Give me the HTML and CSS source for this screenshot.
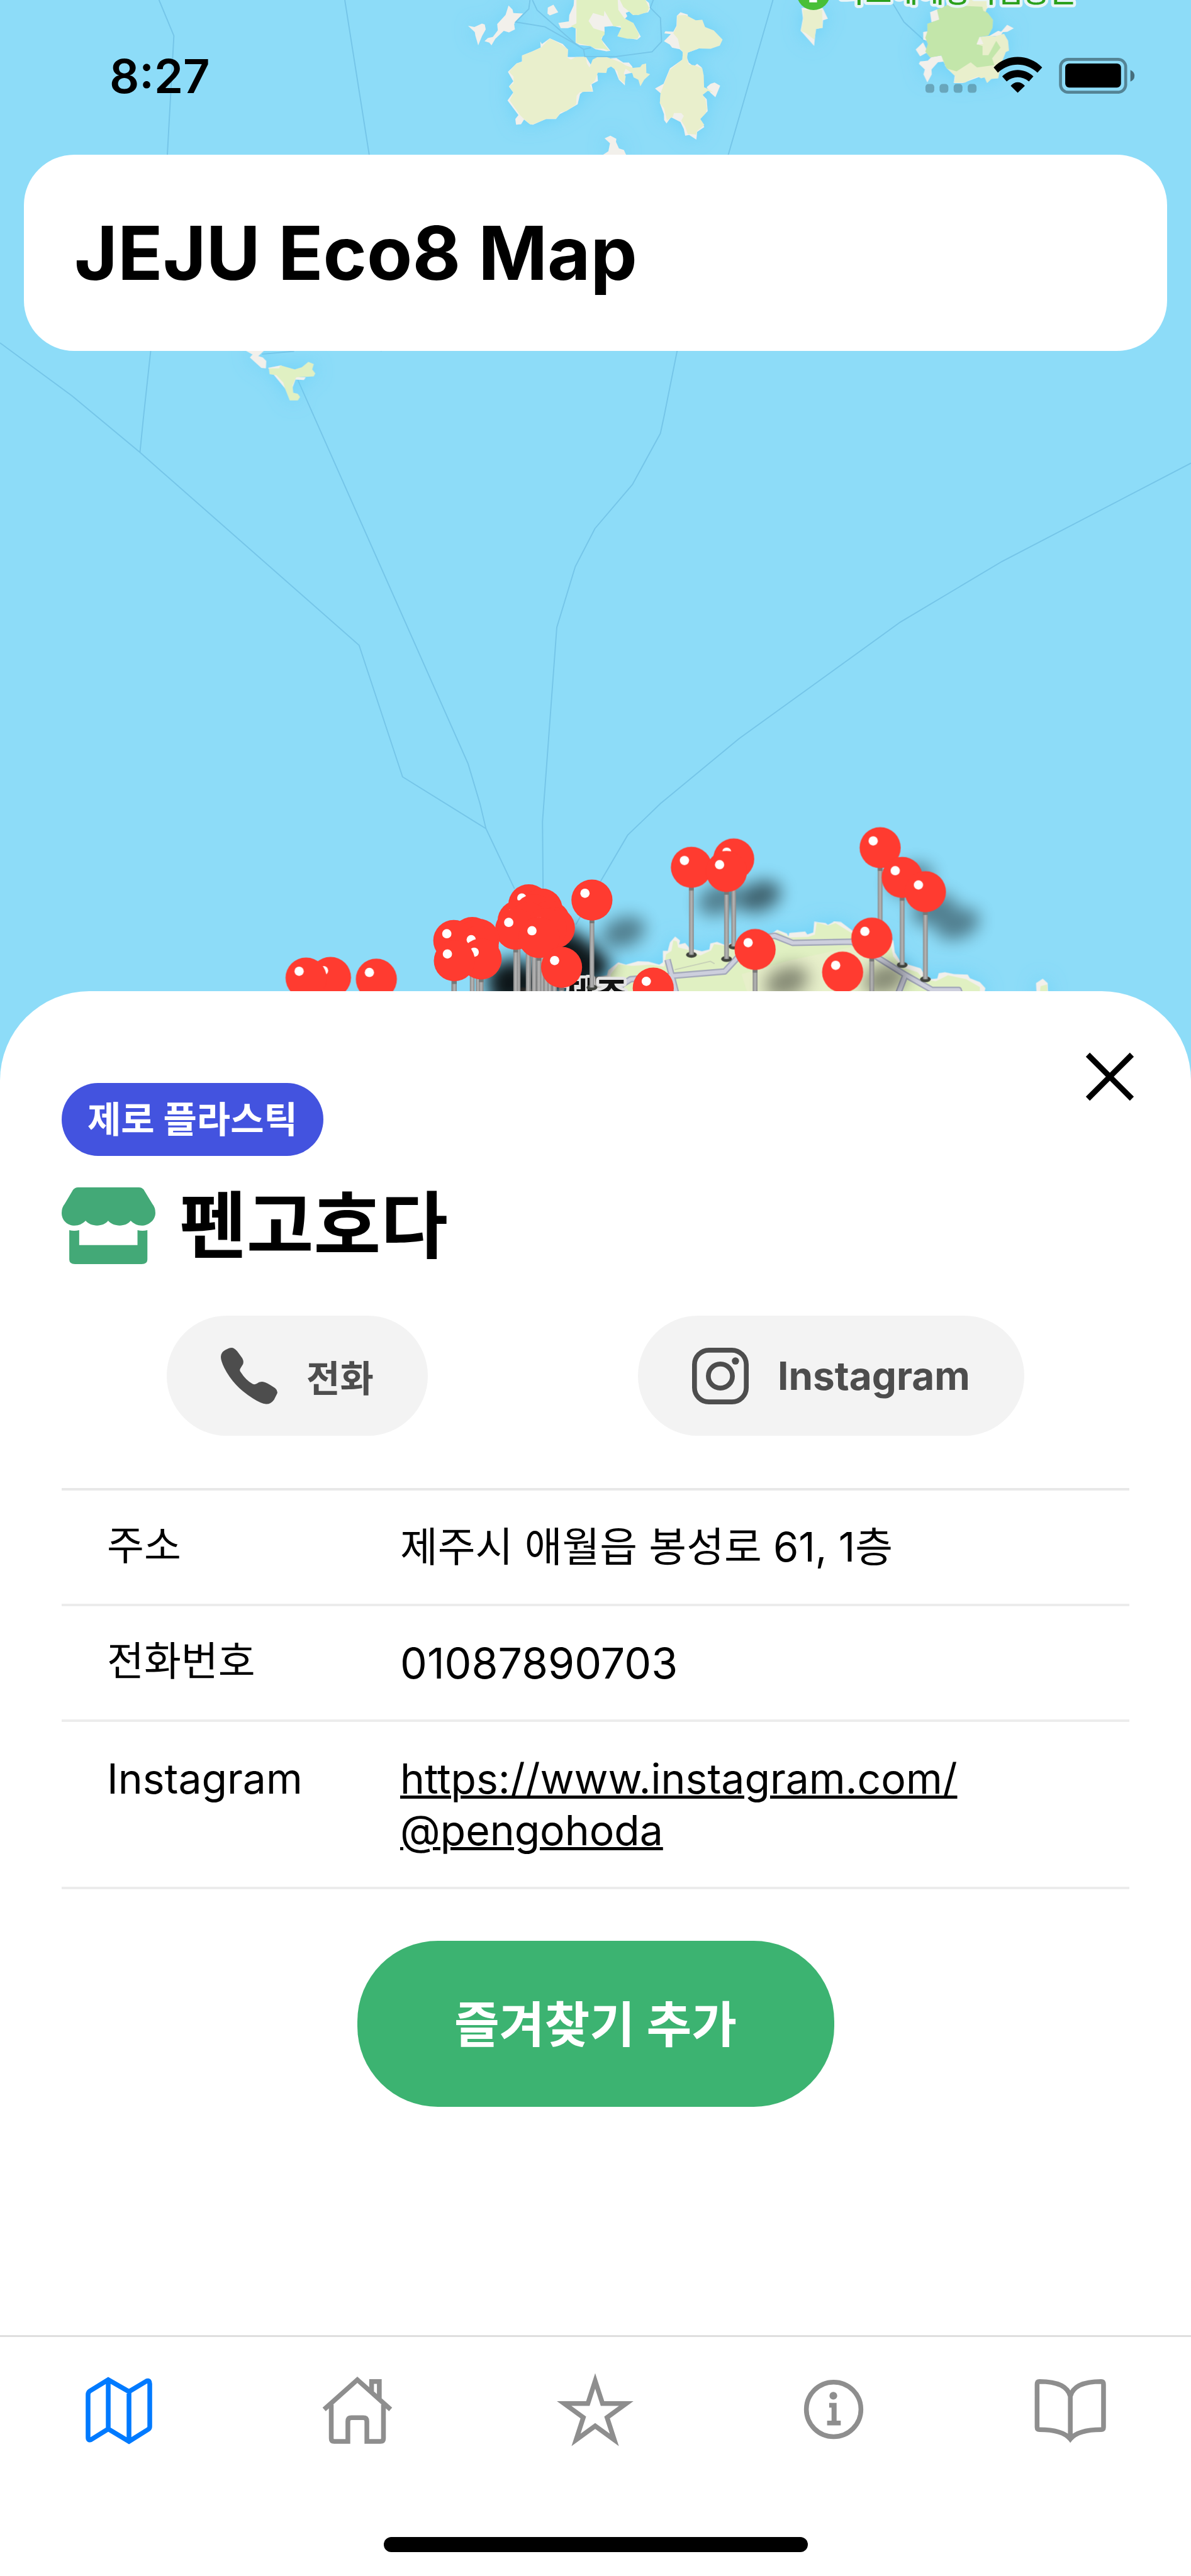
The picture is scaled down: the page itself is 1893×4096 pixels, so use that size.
FILE: index.html
```html
<!DOCTYPE html>
<html lang="ko">
<head>
<meta charset="utf-8">
<meta name="viewport" content="width=device-width, initial-scale=1">
<title>JEJU Eco8 Map</title>
<link rel="stylesheet" href="styles.css">
</head>
<body>
<div class="hero">
  <svg class="map" viewBox="0 0 2000 1830" preserveAspectRatio="xMidYMin slice" role="img" aria-label="제주 지도">
    <defs>
      <linearGradient id="stem" x1="0" x2="1" y1="0" y2="0">
        <stop offset="0" stop-color="#858585"/><stop offset=".5" stop-color="#b8b8b8"/><stop offset="1" stop-color="#858585"/>
      </linearGradient>
      <filter id="soft" x="-60%" y="-60%" width="220%" height="220%"><feGaussianBlur stdDeviation="14"/></filter>
      <filter id="glow" x="-20%" y="-20%" width="140%" height="140%">
        <feDropShadow dx="0" dy="0" stdDeviation="16" flood-color="#68d0f8" flood-opacity=".9"/>
      </filter>
      <g id="pin">
        <ellipse cx="0" cy="147" rx="9" ry="5" fill="#3f423c"/>
        <rect x="-4" y="30" width="8" height="117" fill="url(#stem)"/>
        <rect x="-4" y="33" width="8" height="6" fill="#777"/>
        <circle r="34.5" fill="#ff3b30"/>
        <circle cx="-11.7" cy="-11.4" r="7.8" fill="#fff"/>
      </g>
      <ellipse id="shade" cx="53" cy="54" rx="38" ry="25" transform="rotate(-20 53 54)"/>
    </defs>

    <g class="sea-lines">
      <path d="M267 0L292 60L281 260L253 590L241 700L235 760"/>
      <path d="M579 0L620 260L640 590"/>
      <path d="M0 576L121 665L235 760L603 1084L676 1305L816 1392"/>
      <path d="M500 638L786 1283L806 1350L816 1392L864 1493"/>
      <path d="M1298 0L1223 260L1137 590L1115 700L1109 728L1062 814L999 888L966 952L935 1054L911 1380L912 1500"/>
      <path d="M2000 778L1683 943L1512 1045L1241 1241L1109 1350L1054 1403L1010 1478L967 1553"/>
      <path d="M440 595L494 590M1500 7L1518 37L1553 69"/>
    </g>

    <g filter="url(#glow)">
      <g transform="translate(780 0) scale(.33333)">
        <g fill="#f2f0eb">
          <path d="M18 130L50 136L88 119L102 124L107 148L88 182L69 228L55 180L52 162Z"/>
          <path d="M222 28L242 48L246 66L295 68L259 106L250 121L254 148L224 163L198 155L155 196L136 228L125 215L101 208L118 192L143 186L168 153L165 121L207 75Z"/>
          <path d="M420 38L448 24L472 62L430 78L418 68Z"/>
          <path d="M552 0L550 28L528 76L526 108L473 116L485 142H520L560 130L560 215L580 227L635 232L660 248L715 258L735 256L690 200L706 160L705 135L765 130L850 116L888 185L870 200L780 185L790 140L755 132L808 95L820 82L812 65L830 58L850 76L925 62L935 44L930 15L912 0Z"/>
          <path d="M1070 80L1088 62L1125 74L1120 150L1150 170L1140 240L1180 245L1125 265L1120 290L1130 315L1155 335L1172 322L1195 340L1200 480L1220 500L1225 560L1185 600L1208 640L1172 665L1168 704L1132 680L1112 684L1105 650L1088 615L1040 590L1018 622L1006 605L1005 575L985 520L988 470L960 446L1003 422L1035 345L1098 300L1100 262L1084 248L1046 240L1034 224L1005 208L1040 172L1007 168L1012 158L1052 160L1068 130Z"/>
          <path d="M1220 440L1240 422L1260 416L1288 432L1264 490L1240 468Z"/>
          <path d="M382 210L390 222L430 193L495 222L520 250L520 288L612 288L670 380L672 408L640 425L648 462H596L582 475L570 525L520 555L480 575L460 600L410 600L345 628L330 626L300 602L285 626L260 628L256 600L272 580L217 506L246 466L224 436L246 410L219 362L262 320L290 310L290 280L340 260L384 240Z"/>
          <path d="M735 295L765 292L800 315L828 315L845 335L850 365L808 375L808 430L778 402Z"/>
          <path d="M706 697L735 684L765 700L763 715L778 748L803 756L815 782H695L725 762L733 722Z"/>
        </g>
        <g fill="#e0f0c2">
          <path d="M564 0H772L775 50L805 92L850 116L880 175L872 196L820 195L770 183L790 140L785 130L752 134L705 54L702 82L648 66L625 105L650 143L706 160L705 175L688 192L700 220L730 256L700 246L660 245L635 232L562 216L564 145L535 132L564 118Z"/>
          <path d="M783 0H912L930 40L922 60L875 76L846 74L830 58L800 35Z"/>
        </g>
        <g fill="#e9efcc">
          <path d="M1072 78L1115 76L1165 102L1198 100L1212 136L1256 154L1300 200L1286 230L1240 246L1180 244L1122 266L1122 300L1130 325L1160 330L1198 345L1205 380L1207 440L1225 448L1255 466L1225 458L1200 478L1214 500L1222 545L1216 570L1188 600L1208 630L1172 660L1168 678L1125 675L1112 640L1092 608L1105 584L1092 570H1055L1050 588L1020 606L1005 545L984 520L988 470L1008 415L1035 352L1098 300L1100 262L1086 245L1075 196L1052 168L1070 130Z"/>
          <path d="M388 238L430 193L488 224L522 250L518 290L536 300L560 288L612 286L617 320L630 340L646 300L670 288H715L745 298L790 315L812 330L850 342L885 338L895 325L915 320L916 368L935 374L905 402L886 435L876 402L852 390L846 370L812 346L802 370L812 385L806 420L778 396L770 358L738 335L720 345L714 368L672 366L658 405L632 430L646 458L580 465L565 482L562 526L512 560L484 566L462 598L415 598L345 626L330 626L300 600L280 580L228 506L247 466L224 436L247 420L247 386L224 362L262 320L290 312L290 280L345 258Z"/>
        </g>
      </g>
      <g transform="translate(1330 0) scale(.38265 .33333)">
        <g fill="#f2f0eb">
          <path d="M42 40H134L157 94L136 102L134 140L104 146L97 231L50 170L38 155L48 92Z"/>
          <path d="M575 214L543 250L562 284L596 262ZM655 280L670 310L640 314L612 350L613 375L594 415L577 375L583 350L557 322L562 310L596 306L612 288ZM606 62L640 46L660 100L612 112ZM576 162L594 158V206L576 200ZM830 40L865 20L862 38L838 56ZM862 184L905 155L918 160L944 125L973 143L945 160L925 162L915 180Z"/>
          <path d="M670 330L715 375L710 418L750 418L820 388L900 395L912 360Z"/>
        </g>
        <path fill="#e9efcc" d="M680 0H865L850 60L800 180L822 186L870 180L888 184L930 170L948 205L952 255L938 262L918 320L905 395L875 398L856 418L845 390L830 395L815 386L780 402L760 416H712L717 385L680 345L660 300ZM48 50H132L134 140L106 146L98 200L62 168L40 155L50 92Z"/>
        <path fill="#c3e6aa" d="M636 48L680 26L835 34L840 55L858 64L882 100L880 140L862 178L822 186L810 222L836 232V278H862L896 206L915 240L878 294L888 328L812 340L784 314L722 360L678 345L655 280L606 290L585 260L596 222L585 190L594 158V120L646 98Z"/>
        <path fill="#f2f0eb" d="M825 184L840 222L810 224Z"/>
      </g>
      <g transform="scale(.63776 .44643)">
        <path fill="#f2f0eb" d="M645 1318L665 1334L658 1345L688 1384L700 1386L701 1358L692 1345L680 1340L695 1320ZM706 1384L740 1375L790 1420H805L800 1430L778 1428L765 1478L752 1464Z"/>
        <path fill="#e0f0c2" d="M708 1386L735 1386L738 1375L776 1390L795 1382L812 1362L826 1370L822 1390L830 1405L826 1416L780 1420L770 1450L772 1478L784 1482L790 1494L784 1507H763L750 1460L746 1440L728 1412L710 1408Z"/>
      </g>
      <g transform="translate(1000 1350) scale(.5102 .33333)">
        <path fill="#f2f0eb" d="M-290 960L-240 925L-200 940L-60 950L-40 880L38 866L42 840L75 800L100 812L140 795L175 797L210 812L222 800V742H238L245 700L262 670L278 690L275 710L295 703L310 730L350 745L375 735L378 705L400 697L425 712L455 700L520 680L580 655L598 636L630 655L635 670L638 652L690 645L697 660L717 650L720 596L757 602L765 612L785 595L808 597L845 640L980 690L985 750L1005 800L1070 830L1078 850L1105 885L1125 882L1130 855L1150 850L1180 860L1225 862L1232 880L1265 900L1283 930L1268 1050H-290ZM1455 1050L1450 905L1472 883L1488 905L1492 1050Z"/>
        <path fill="#e0f0c2" d="M45 950L50 860L75 810L120 818L180 812L226 822L232 760L250 742L256 690L268 695L272 725L300 735L345 765L380 740L390 708L420 715L455 720L520 690L580 662L600 645L628 668L640 675L700 672L722 660L728 600L765 615L790 602L840 650L970 700L980 770L1010 825L1060 850L1080 885L1120 895L1160 865L1220 885L1265 925L1265 1050H45ZM1455 1050L1465 920L1486 912L1492 1050Z"/>
        <path fill="#e9efcc" opacity=".8" d="M480 860L640 790L760 750L850 720L960 780L1000 870V1050H520Z"/>
      </g>
    </g>
    <g class="roads">
      <path class="road-edge" d="M1040 1672L1043 1655L1059 1645L1133 1639L1217 1632L1268 1577L1301 1572L1331 1584L1431 1582L1521 1638L1565 1663L1610 1663L1614 1675M1121 1612L1128 1639L1137 1675M1520 1639L1506 1675"/>
      <path class="road-fill" d="M1040 1672L1043 1655L1059 1645L1133 1639L1217 1632L1268 1577L1301 1572L1331 1584L1431 1582L1521 1638L1565 1663L1610 1663L1614 1675M1121 1612L1128 1639L1137 1675M1520 1639L1506 1675"/>
      <path class="lane" d="M1133 1629L1193 1615L1200 1619"/>
    </g>
    <g class="sea-lines">
      <path d="M890 0L888 15L866 37L915 45L968 75L980 83L992 80M894 0L902 17L968 75M980 83L982 95H1035L1095 87L1111 70L1109 30L1092 13L1097 0"/>
    </g>
    <circle cx="1366" cy="-11" r="28" fill="#48bf38"/>
    <path d="M1359 4H1372V0H1368V-8H1363V0H1359Z" fill="#fff"/>
    <text class="park-label" x="1409" y="4">다도해해상국립공원</text>

    <g filter="url(#soft)" opacity=".42">
      <use href="#shade" x="1155" y="1457"/><use href="#shade" x="1477" y="1424"/><use href="#shade" x="1515" y="1474"/><use href="#shade" x="1555" y="1498"/><use href="#shade" x="994" y="1512"/><use href="#shade" x="1268" y="1595"/><use href="#shade" x="1434" y="1590"/>
    </g>
    <g filter="url(#soft)" opacity=".55"><use href="#shade" x="1222" y="1452"/></g>
    <g filter="url(#soft)" opacity=".9">
      <use href="#shade" x="888" y="1535"/><use href="#shade" x="910" y="1550"/><use href="#shade" x="925" y="1565"/><use href="#shade" x="910" y="1590"/><use href="#shade" x="935" y="1575"/><use href="#shade" x="800" y="1584"/><use href="#shade" x="805" y="1610"/><use href="#shade" x="840" y="1600"/>
    </g>
    <text class="city-label" x="944" y="1694">제주</text>

    <use href="#pin" x="888" y="1520"/><use href="#pin" x="910" y="1527"/><use href="#pin" x="897" y="1537"/><use href="#pin" x="870" y="1547"/><use href="#pin" x="923" y="1548"/><use href="#pin" x="887" y="1550"/><use href="#pin" x="931" y="1559"/><use href="#pin" x="917" y="1560"/><use href="#pin" x="866" y="1561"/><use href="#pin" x="905" y="1575"/><use href="#pin" x="943" y="1625"/>
    <use href="#pin" x="793" y="1575"/><use href="#pin" x="804" y="1578"/><use href="#pin" x="762" y="1580"/><use href="#pin" x="803" y="1590"/><use href="#pin" x="808" y="1611"/><use href="#pin" x="763" y="1614"/>
    <use href="#pin" x="555" y="1642"/><use href="#pin" x="514" y="1643"/><use href="#pin" x="632" y="1645"/>
    <use href="#pin" x="994" y="1512"/>
    <use href="#pin" x="1232" y="1443"/><use href="#pin" x="1161" y="1457"/><use href="#pin" x="1220" y="1464"/>
    <use href="#pin" x="1478" y="1424"/><use href="#pin" x="1515" y="1474"/><use href="#pin" x="1554" y="1498"/>
    <use href="#pin" x="1464" y="1576"/><use href="#pin" x="1268" y="1595"/><use href="#pin" x="1415" y="1633"/><use href="#pin" x="1097" y="1660"/>
  </svg>

  <header class="top">
    <div class="status">
      <time class="clock">8:27</time>
      <svg class="status-icons" viewBox="1545 90 370 75" aria-hidden="true">
        <g fill="#000" opacity=".24"><rect x="1551" y="141" width="15" height="15" rx="5"/><rect x="1575" y="141" width="15" height="15" rx="5"/><rect x="1599" y="141" width="15" height="15" rx="5"/><rect x="1623" y="141" width="15" height="15" rx="5"/></g>
        <g transform="translate(1330 0) scale(.38265 .33333)">
          <path d="M881 338C940 267 1036 267 1097 338L1076 365C1025 310 951 310 900 365ZM919 384C958 340 1018 340 1058 384L1038 410C1008 381 968 381 939 410ZM957 432C974 408 1002 408 1020 432L988 468Z"/>
        </g>
        <rect x="1781" y="99" width="111" height="56" rx="13" fill="none" stroke="#000" stroke-opacity=".4" stroke-width="5"/>
        <rect x="1789" y="106" width="95" height="41" rx="7"/>
        <path d="M1900 117Q1907 120 1907 127Q1907 134 1900 137Z" fill-opacity=".5"/>
      </svg>
    </div>
    <div class="title-card"><h1>JEJU Eco8 Map</h1></div>
  </header>
</div>

<main class="sheet">
  <div class="sheet-head">
    <span class="badge">제로 플라스틱</span>
    <button class="close" type="button" aria-label="닫기">
      <svg viewBox="0 0 78 78"><path d="M4 4L74 74M74 4L4 74" stroke="#000" stroke-width="9"/></svg>
    </button>
  </div>

  <div class="place">
    <svg class="store" viewBox="162 655 246 255" preserveAspectRatio="none" aria-hidden="true">
      <path d="M205 655H365Q372 655 377 662L400 710Q408 722 408 740C408 764 390 782 372 782Q355 782 343 766C332 787 297 787 284 766C272 787 238 787 225 766Q213 782 196 782C177 782 162 764 162 740Q162 722 170 710L192 663Q197 655 205 655ZM182 797Q195 801 208 797V847H361V797Q374 801 387 797V895Q387 910 372 910H197Q182 910 182 895Z"/>
    </svg>
    <h2>펜고호다</h2>
  </div>

  <div class="actions">
    <button class="pill" type="button">
      <svg viewBox="585 1182 148 186" preserveAspectRatio="none" aria-hidden="true"><path fill="currentColor" d="M613 1182Q620 1182 628 1194L641 1216Q647 1230 641 1240L636 1250Q633 1256 637 1262Q650 1288 668 1301Q674 1304 679 1300Q686 1292 696 1294Q706 1296 727 1315Q735 1324 732 1333L724 1353Q715 1368 703 1367Q690 1366 668 1348Q640 1325 625 1304Q606 1278 594 1248Q585 1225 585 1212Q585 1198 596 1190Q606 1182 613 1182Z"/></svg>
      <span>전화</span>
    </button>
    <button class="pill" type="button" lang="en">
      <svg viewBox="0 0 94 94" aria-hidden="true"><g fill="none" stroke="currentColor" stroke-width="8"><rect x="4" y="4" width="86" height="86" rx="24"/><circle cx="47" cy="47" r="20"/></g><circle cx="72" cy="22" r="6" fill="currentColor"/></svg>
      <span>Instagram</span>
    </button>
  </div>

  <table class="info">
    <tbody>
      <tr><th scope="row">주소</th><td>제주시 애월읍 봉성로 61, 1층</td></tr>
      <tr><th scope="row">전화번호</th><td class="number">01087890703</td></tr>
      <tr><th scope="row" lang="en">Instagram</th><td lang="en"><a href="https://www.instagram.com/@pengohoda">https://www.instagram.com/<wbr>@pengohoda</a></td></tr>
    </tbody>
  </table>

  <button class="favorite" type="button">즐겨찾기 추가</button>
</main>

<footer class="tabs">
  <nav>
    <a class="tab active" href="#map" aria-label="지도"><svg viewBox="0 0 140 140"><path d="M18 43Q18 39 21 37L52 18L87 38L117 20Q122 18 122 25V97Q122 100 119 102L87 122L52 101L23 119Q18 121 18 115ZM52 18V101M87 38V122"/></svg></a>
    <a class="tab" href="#home" aria-label="홈"><svg viewBox="0 0 140 140"><path d="M14 68L70 18L126 68M26 60V117Q26 122 31 122H54V88Q54 82 60 82H80Q86 82 86 88V122H109Q114 122 114 117V60M94 38V21H107V50"/></svg></a>
    <a class="tab" href="#favorites" aria-label="즐겨찾기"><svg viewBox="0 0 140 140"><path stroke-miterlimit="10" d="M70 20L82.3 58H122.3L90 81.5L102.3 119.5L70 96L37.7 119.5L50 81.5L17.7 58H57.7Z"/></svg></a>
    <a class="tab" href="#info" aria-label="정보"><svg viewBox="0 0 140 140"><circle cx="70" cy="68" r="46"/><circle class="solid" cx="69.5" cy="45" r="6.5"/><path class="solid" d="M62.5 57H75V87H82V95H59V87H66.5V65H62.5Z"/></svg></a>
    <a class="tab" href="#guide" aria-label="가이드"><svg viewBox="0 0 140 140"><path d="M67 46C63 30 47 21 15 21Q11 21 11 26V98Q11 102 15 102C42 102 59 108 67 118C75 108 92 102 119 102Q123 102 123 98V26Q123 21 119 21C87 21 71 30 67 46V116"/></svg></a>
  </nav>
  <div class="home-indicator"></div>
</footer>
</body>
</html>
```

FILE: styles.css
```css
* { box-sizing: border-box; }

body {
  margin: 0;
  min-height: 100vh;
  display: flex;
  flex-direction: column;
  background: #fff;
  color: #000;
  font-family: Inter, "Noto Sans CJK KR", sans-serif;
}

button {
  border: 0;
  padding: 0;
  background: none;
  font: inherit;
  cursor: pointer;
}

svg { display: block; }

/* Map with the status bar and title on top */
.hero { display: grid; background: #8ddcf8; }
.hero > * { grid-area: 1 / 1; }
.map { width: 100%; height: 1732px; background: #8ddcf8; }
.top { z-index: 1; }

.sea-lines path { fill: none; stroke: #75c5e8; stroke-width: 2; }
.road-edge, .road-fill { fill: none; stroke-linejoin: round; }
.road-edge { stroke: #a6abbb; stroke-width: 11; }
.road-fill { stroke: #cdcfdd; stroke-width: 6; }
.lane { fill: none; stroke: #c8d2b8; stroke-width: 2; }

.park-label, .city-label {
  font-family: "Noto Sans CJK KR", sans-serif;
  paint-order: stroke;
  stroke-linejoin: round;
}
.park-label { font-size: 48px; font-weight: 500; fill: #2ba01c; stroke: #e9f5f8; stroke-width: 10px; }
.city-label { font-size: 60px; font-weight: 700; fill: #111; stroke: #e4e4e4; stroke-width: 10px; }

.status {
  display: flex;
  align-items: center;
  justify-content: space-between;
  padding: 86px 80px 90px 174px;
}
.clock { font-size: 74px; font-weight: 600; line-height: 70px; }
.status-icons { width: 350px; height: 70px; }

.title-card {
  margin: 0 38px;
  padding: 86px 80px;
  border-radius: 80px;
  background: #fff;
}
.title-card h1 { margin: 0; font-size: 118px; line-height: 140px; font-weight: 700; }

/* Detail sheet */
.sheet {
  position: relative;
  z-index: 2;
  flex: 1;
  display: flex;
  flex-direction: column;
  margin-top: -156px;
  padding: 97px 98px 80px;
  border-radius: 142px 142px 0 0;
  background: #fff;
}

.sheet-head {
  display: flex;
  justify-content: space-between;
  height: 165px;
  margin-right: -8px;
}
.badge {
  align-self: flex-end;
  padding: 0 41px;
  border-radius: 58px;
  background: #4353df;
  color: #fff;
  font-size: 58px;
  font-weight: 700;
  line-height: 116px;
}
.close { align-self: flex-start; }
.close svg { width: 78px; height: 78px; }

.place { display: flex; align-items: center; gap: 38px; height: 122px; margin-top: 50px; }
.place h2 { margin: 0; font-size: 116px; line-height: 122px; font-weight: 700; }
.store { width: 149px; height: 122px; fill: #43a977; }

.actions { display: flex; justify-content: space-around; margin-top: 82px; }
.pill {
  display: flex;
  align-items: center;
  gap: 46px;
  height: 191px;
  padding: 0 86px;
  border-radius: 96px;
  background: #f3f3f3;
  color: #4d4d4d;
  font-size: 58px;
  font-weight: 700;
}
.pill:lang(en) { font-size: 62px; }
.pill svg { width: 90px; height: 90px; }

.info {
  width: 100%;
  margin-top: 83px;
  border-collapse: collapse;
  table-layout: fixed;
  font-size: 65px;
  line-height: 82px;
}
.info tr { border-bottom: 4px solid #ececec; }
.info tr:first-child { border-top: 4px solid #e8e8e8; }
.info th, .info td { padding: 49px 0; text-align: left; vertical-align: top; font-weight: 400; }
.info th { width: 538px; padding-left: 72px; }
.info th:lang(ko) { font-size: 64px; line-height: 76px; }
.info :lang(en) { font-size: 66px; }
.info .number { font-size: 68px; }
.info a { color: inherit; text-decoration-thickness: 5px; }

.favorite {
  align-self: center;
  width: 758px;
  height: 264px;
  margin-top: 82px;
  padding-bottom: 8px;
  border-radius: 128px;
  background: #3cb371;
  color: #fff;
  font-size: 78px;
  font-weight: 700;
}

/* Tab bar */
.tabs { padding: 51px 0 38px; border-top: 3px solid #dedede; background: #fff; }
.tabs nav { display: grid; grid-template-columns: repeat(5, 1fr); justify-items: center; }
.tab { color: #8e8e8e; }
.tab.active { color: #007aff; }
.tab svg { width: 132px; height: 132px; fill: none; stroke: currentColor; stroke-width: 8; }
.tab .solid { fill: currentColor; stroke: none; }
.home-indicator { width: 674px; height: 24px; margin: 135px auto 0; border-radius: 12px; background: #000; }
```
